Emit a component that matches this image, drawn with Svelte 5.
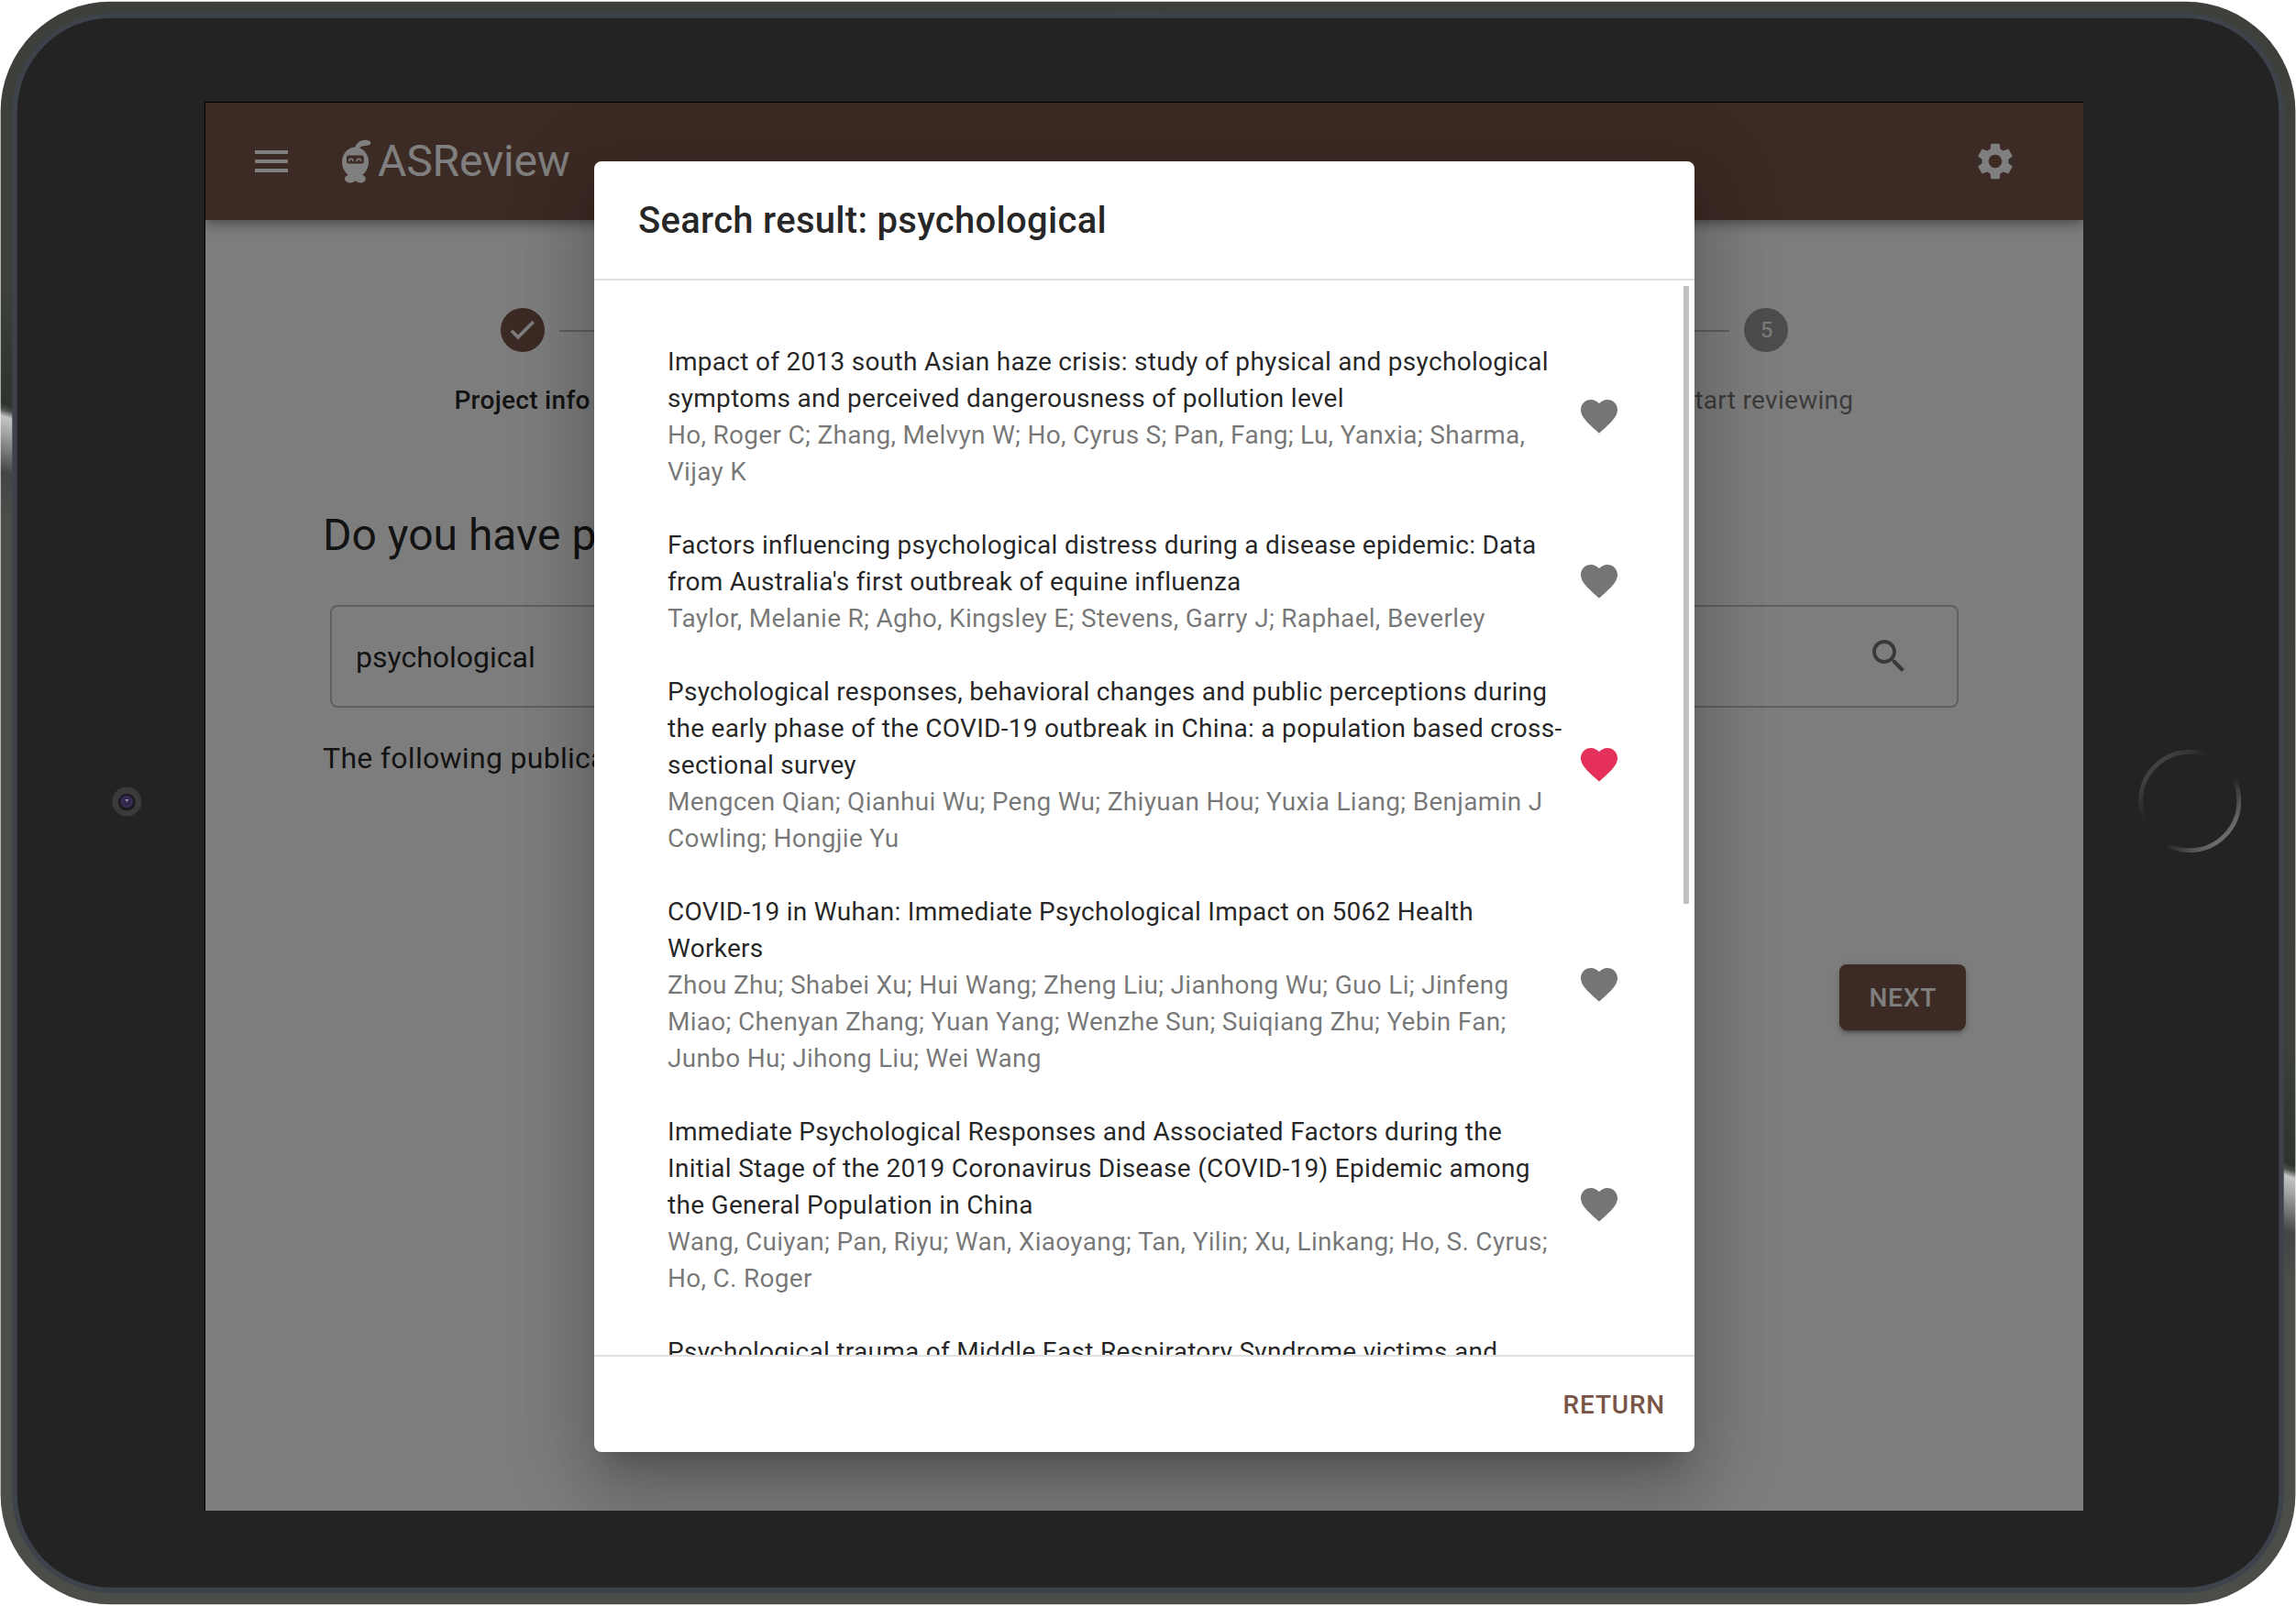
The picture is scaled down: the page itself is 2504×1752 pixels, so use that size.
<script lang="ts">
  type Paper = { title: string; authors: string; liked?: boolean };

  const steps = [
    { label: 'Project info', state: 'done' },
    { label: '', state: 'todo' },
    { label: '', state: 'todo' },
    { label: '', state: 'todo' },
    { label: 'Start reviewing', state: 'todo' },
  ];

  const papers: Paper[] = [
    {
      title: 'Impact of 2013 south Asian haze crisis: study of physical and psychological symptoms and perceived dangerousness of pollution level',
      authors: 'Ho, Roger C; Zhang, Melvyn W; Ho, Cyrus S; Pan, Fang; Lu, Yanxia; Sharma, Vijay K',
    },
    {
      title: "Factors influencing psychological distress during a disease epidemic: Data from Australia's first outbreak of equine influenza",
      authors: 'Taylor, Melanie R; Agho, Kingsley E; Stevens, Garry J; Raphael, Beverley',
    },
    {
      title: 'Psychological responses, behavioral changes and public perceptions during the early phase of the COVID-19 outbreak in China: a population based cross-sectional survey',
      authors: 'Mengcen Qian; Qianhui Wu; Peng Wu; Zhiyuan Hou; Yuxia Liang; Benjamin J Cowling; Hongjie Yu',
      liked: true,
    },
    {
      title: 'COVID-19 in Wuhan: Immediate Psychological Impact on 5062 Health Workers',
      authors: 'Zhou Zhu; Shabei Xu; Hui Wang; Zheng Liu; Jianhong Wu; Guo Li; Jinfeng Miao; Chenyan Zhang; Yuan Yang; Wenzhe Sun; Suiqiang Zhu; Yebin Fan; Junbo Hu; Jihong Liu; Wei Wang',
    },
    {
      title: 'Immediate Psychological Responses and Associated Factors during the Initial Stage of the 2019 Coronavirus Disease (COVID-19) Epidemic among the General Population in China',
      authors: 'Wang, Cuiyan; Pan, Riyu; Wan, Xiaoyang; Tan, Yilin; Xu, Linkang; Ho, S. Cyrus; Ho, C. Roger',
    },
    {
      title: 'Psychological trauma of Middle East Respiratory Syndrome victims and bereaved families',
      authors: 'Yoon, Hyun Seo',
    },
  ];
</script>

<div class="device">
  <!-- Tablet body: metal rim, inner bevel, camera and home button -->
  <svg class="body" viewBox="0 0 2504 1752" aria-hidden="true">
    <defs>
      <linearGradient id="metal" gradientUnits="userSpaceOnUse" x1="1638.6" y1="-285.9" x2="865.4" y2="2037.9">
        <stop offset="0" stop-color="#3e403c" />
        <stop offset=".445" stop-color="#3c3f3a" />
        <stop offset=".492" stop-color="#2e332c" />
        <stop offset=".4945" stop-color="#4a4d49" />
        <stop offset=".4975" stop-color="#c3c4c6" />
        <stop offset=".504" stop-color="#a4a5a6" />
        <stop offset=".521" stop-color="#434545" />
        <stop offset=".54" stop-color="#4b4d49" />
        <stop offset="1" stop-color="#4b4d49" />
      </linearGradient>
      <linearGradient id="ring" x1="0" y1="0" x2="1" y2="1">
        <stop offset="0.05" stop-color="#505050" />
        <stop offset=".36" stop-color="#232323" />
        <stop offset=".6" stop-color="#232323" />
        <stop offset=".85" stop-color="#6c6c6c" />
      </linearGradient>
      <radialGradient id="lens">
        <stop offset="0" stop-color="#5a4f78" />
        <stop offset=".3" stop-color="#2c2144" />
        <stop offset=".75" stop-color="#3b2f5c" />
        <stop offset="1" stop-color="#17141d" />
      </radialGradient>
    </defs>
    <rect x=".6" y="1.7" width="2502.8" height="1748.6" rx="120" fill="url(#metal)" />
    <rect x="13.3" y="14.2" width="2477.4" height="1723.6" rx="108" fill="#3e424b" />
    <rect x="18.7" y="19.8" width="2466.6" height="1712" rx="102" fill="#232323" />
    <circle cx="138.3" cy="874.5" r="16" fill="#3a3a3a" />
    <circle cx="138.3" cy="875.2" r="9.4" fill="#1b1a1e" />
    <circle cx="138.3" cy="874.5" r="7.6" fill="url(#lens)" />
    <ellipse cx="138.3" cy="872.8" rx="2" ry=".8" fill="#b9b4c4" />
    <circle cx="2388.200" cy="874" r="53.600" fill="none" stroke="url(#ring)" stroke-width="4.800" />
  </svg>

  <div class="screen">
    <header class="appbar">
      <svg class="icon" viewBox="0 0 24 24"><path d="M3 18h18v-2H3v2zm0-5h18v-2H3v2zm0-7v2h18V6H3z" /></svg>
      <div class="brand">
        <svg class="mascot" viewBox="0 0 32 48">
          <path d="M14 10C15 4.800 19.500.800 25 .800c3.600 0 6.300 1.200 6.300 3.200 0 2.300-2.800 2.900-6 3-3.400.1-5 .800-6.300 3z" />
          <ellipse cx="14.500" cy="24.800" rx="14.500" ry="16.400" />
          <path d="M7 36.500h15.200l-.8 2.300c2.400.3 4.400 2 4.400 4.300 0 2.500-2.500 4.500-5.600 4.500-2.400 0-4.500-.9-5.600-2.500-1.100 1.600-3.200 2.500-5.600 2.500-3.300 0-6-2-6-4.500 0-2.300 2-4 4.600-4.300z" />
          <rect class="visor" x="5" y="17.400" width="18.800" height="9.200" rx="2.400" />
          <path class="eyes" d="M7.700 24.200v-.7q0-2.300 2.200-2.300t2.200 2.300v.7M16.100 24.200v-.7q0-2.300 2.200-2.300t2.200 2.300v.7" />
        </svg>
        <span class="name">ASReview</span>
      </div>
      <svg class="icon gear" viewBox="0 0 24 24"><path d="M19.140 12.940c.04-.3.060-.61.060-.94 0-.32-.02-.64-.07-.94l2.030-1.580c.18-.14.23-.41.120-.61l-1.920-3.320c-.12-.22-.37-.29-.59-.22l-2.390.96c-.5-.38-1.030-.7-1.620-.94l-.36-2.540c-.04-.24-.24-.41-.48-.41h-3.840c-.24 0-.43.170-.47.410l-.36 2.540c-.59.240-1.130.570-1.620.940l-2.390-.96c-.22-.08-.47 0-.59.220L2.740 8.870c-.12.210-.08.470.120.610l2.030 1.580c-.05.300-.09.630-.09.940s.02.640.070.940l-2.030 1.580c-.18.140-.23.410-.12.610l1.920 3.320c.12.220.37.290.59.220l2.390-.96c.5.380 1.030.700 1.620.940l.36 2.540c.05.240.240.410.480.410h3.840c.24 0 .44-.17.470-.41l.36-2.540c.59-.24 1.130-.56 1.620-.94l2.390.96c.22.080.47 0 .59-.22l1.920-3.320c.12-.22.070-.47-.12-.61l-2.010-1.580zM12 15.600c-1.980 0-3.600-1.620-3.600-3.600s1.620-3.600 3.600-3.600 3.600 1.620 3.600 3.600-1.620 3.600-3.600 3.600z" /></svg>
    </header>

    <main class="page">
      <ol class="stepper">
        {#each steps as step, i}
          <li class="step {step.state}">
            <div class="track">
              <span class="line" class:none={i === 0}></span>
              <span class="dot">
                {#if step.state === 'done'}
                  <svg viewBox="0 0 24 24"><path d="M9.500 14.600 17.200 6.900l1.300 1.300-9 9-4.200-4.200 1.300-1.300z" /></svg>
                {:else}
                  {i + 1}
                {/if}
              </span>
              <span class="line" class:none={i === steps.length - 1}></span>
            </div>
            <span class="label">{step.label}</span>
          </li>
        {/each}
      </ol>

      <h1>Do you have prior knowledge?</h1>
      <div class="search">
        <span>psychological</span>
        <svg class="icon" viewBox="0 0 24 24"><path d="M15.500 14h-.79l-.28-.27C15.410 12.590 16 11.110 16 9.500 16 5.910 13.090 3 9.500 3S3 5.910 3 9.500 5.910 16 9.500 16c1.610 0 3.090-.59 4.230-1.570l.27.280v.79l5 4.990L20.490 19l-4.990-5zm-6 0C7.010 14 5 11.990 5 9.500S7.010 5 9.500 5 14 7.010 14 9.500 11.990 14 9.500 14z" /></svg>
      </div>
      <p>The following publications</p>
      <div class="actions"><button class="next">NEXT</button></div>
    </main>

    <div class="backdrop">
      <section class="dialog">
        <h2>Search result: psychological</h2>
        <div class="results">
          <ul>
            {#each papers as paper}
              <li>
                <div class="text">
                  <div class="title">{paper.title}</div>
                  <div class="authors">{paper.authors}</div>
                </div>
                <svg class="icon heart" class:liked={paper.liked} viewBox="0 0 24 24"><path d="M12 21.350l-1.450-1.320C5.400 15.360 2 12.280 2 8.500 2 5.420 4.420 3 7.500 3c1.740 0 3.410.81 4.500 2.090C13.090 3.810 14.760 3 16.500 3 19.580 3 22 5.420 22 8.500c0 3.780-3.400 6.860-8.550 11.540L12 21.350z" /></svg>
              </li>
            {/each}
          </ul>
          <span class="thumb"></span>
        </div>
        <footer><button class="return">RETURN</button></footer>
      </section>
    </div>
  </div>
</div>

<style>
  :global(body) {
    background: #fff;
    font-family: Roboto, 'Liberation Sans', sans-serif;
  }
  .device {
    position: relative;
    box-sizing: border-box;
    width: 2504px;
    height: 1752px;
    padding: 111px 0 0 223px;
    overflow: hidden;
  }
  .body {
    position: absolute;
    inset: 0;
    width: 2504px;
    height: 1752px;
  }
  .screen {
    position: relative;
    width: 2048px;
    height: 1536px;
    border: solid #000;
    border-width: 1px 0 0 1px;
    background: #fafafa;
    overflow: hidden;
    color: rgba(0, 0, 0, 0.87);
  }
  .icon {
    flex: none;
    width: 48px;
    height: 48px;
    fill: currentColor;
  }

  .appbar {
    position: relative;
    display: flex;
    align-items: center;
    box-sizing: border-box;
    height: 128px;
    padding: 0 72px 0 48px;
    background: #795548;
    color: #fff;
    box-shadow: 0 4px 8px -2px rgba(0, 0, 0, 0.2), 0 8px 10px rgba(0, 0, 0, 0.14), 0 2px 20px rgba(0, 0, 0, 0.12);
  }
  .brand {
    display: flex;
    align-items: center;
    margin-left: 53px;
    gap: 7px;
  }
  .mascot {
    width: 32px;
    height: 48px;
    fill: #fff;
  }
  .visor {
    fill: #795548;
  }
  .eyes {
    fill: none;
    stroke: #fff;
    stroke-width: 1.5;
  }
  .name {
    font-size: 48px;
    line-height: 64px;
    letter-spacing: -0.15px;
  }
  .gear {
    margin-left: auto;
  }

  .page {
    padding: 0 128px;
  }
  .stepper {
    display: flex;
    margin: 0;
    padding: 96px 48px 0;
    list-style: none;
  }
  .step {
    flex: 1;
    min-width: 0;
    text-align: center;
  }
  .track {
    display: flex;
    align-items: center;
    gap: 16px;
  }
  .line {
    flex: 1;
    height: 2px;
    margin-top: 2px;
    background: #bdbdbd;
  }
  .line.none {
    visibility: hidden;
  }
  .dot {
    display: flex;
    align-items: center;
    justify-content: center;
    width: 48px;
    height: 48px;
    border-radius: 50%;
    background: #9a9a9a;
    color: #fafafa;
    font-size: 24px;
  }
  .done .dot {
    background: #795548;
  }
  .dot svg {
    width: 48px;
    height: 48px;
    fill: #fafafa;
  }
  .label {
    display: block;
    height: 40px;
    margin-top: 33px;
    font-size: 28px;
    line-height: 40px;
    letter-spacing: 0.3px;
    color: rgba(0, 0, 0, 0.54);
    white-space: nowrap;
  }
  .done .label {
    font-weight: 500;
    color: rgba(0, 0, 0, 0.87);
  }
  h1 {
    margin: 95px 0 0;
    font-size: 48px;
    font-weight: 400;
    line-height: 64px;
  }
  .search {
    display: flex;
    align-items: center;
    justify-content: space-between;
    box-sizing: border-box;
    height: 112px;
    margin: 44px 8px 0;
    padding: 0 50px 0 26px;
    border: 2px solid rgba(0, 0, 0, 0.23);
    border-radius: 8px;
    font-size: 32px;
  }
  .search span {
    padding-top: 2px;
  }
  .search .icon {
    color: rgba(0, 0, 0, 0.54);
  }
  p {
    margin: 31px 0 0;
    font-size: 32px;
    line-height: 48px;
    letter-spacing: 0.3px;
  }
  .actions {
    display: flex;
    justify-content: flex-end;
    margin-top: 201px;
  }
  button {
    border: 0;
    border-radius: 8px;
    font: 500 28px/48px Roboto, 'Liberation Sans', sans-serif;
    letter-spacing: 0.8px;
  }
  .next {
    padding: 13px 32px 11px;
    background: #795548;
    color: #fff;
    box-shadow: 0 6px 2px -4px rgba(0, 0, 0, 0.2), 0 4px 4px rgba(0, 0, 0, 0.14), 0 2px 10px rgba(0, 0, 0, 0.12);
  }

  .backdrop {
    position: absolute;
    inset: 0;
    display: flex;
    justify-content: center;
    padding: 64px 0;
    background: rgba(0, 0, 0, 0.5);
  }
  .dialog {
    display: flex;
    flex-direction: column;
    width: 1200px;
    border-radius: 8px;
    background: #fff;
    box-shadow: 0 22px 30px -14px rgba(0, 0, 0, 0.2), 0 48px 76px 6px rgba(0, 0, 0, 0.14), 0 18px 92px 16px rgba(0, 0, 0, 0.12);
  }
  h2 {
    margin: 0;
    padding: 33px 48px 31px;
    font-size: 40px;
    font-weight: 500;
    line-height: 64px;
    letter-spacing: 0.3px;
  }
  .results {
    position: relative;
    flex: 1;
    min-height: 0;
    overflow: hidden;
    border: solid #e0e0e0;
    border-width: 2px 0;
  }
  ul {
    margin: 0;
    padding: 48px 80px 0;
    list-style: none;
  }
  .results li {
    display: flex;
    align-items: center;
    justify-content: space-between;
    padding: 19px 0;
    font-size: 28px;
  }
  .text {
    width: 980px;
    padding-top: 2px;
    line-height: 40px;
    letter-spacing: 0.29px;
  }
  .authors {
    color: rgba(0, 0, 0, 0.54);
  }
  .heart {
    color: #757575;
  }
  .heart.liked {
    color: #e4305a;
  }
  .thumb {
    position: absolute;
    top: 6px;
    right: 6px;
    width: 6px;
    height: 674px;
    background: #c1c1c1;
  }
  footer {
    display: flex;
    justify-content: flex-end;
    padding: 16px;
  }
  .return {
    padding: 13px 16px 11px;
    background: none;
    color: #795548;
  }
</style>
